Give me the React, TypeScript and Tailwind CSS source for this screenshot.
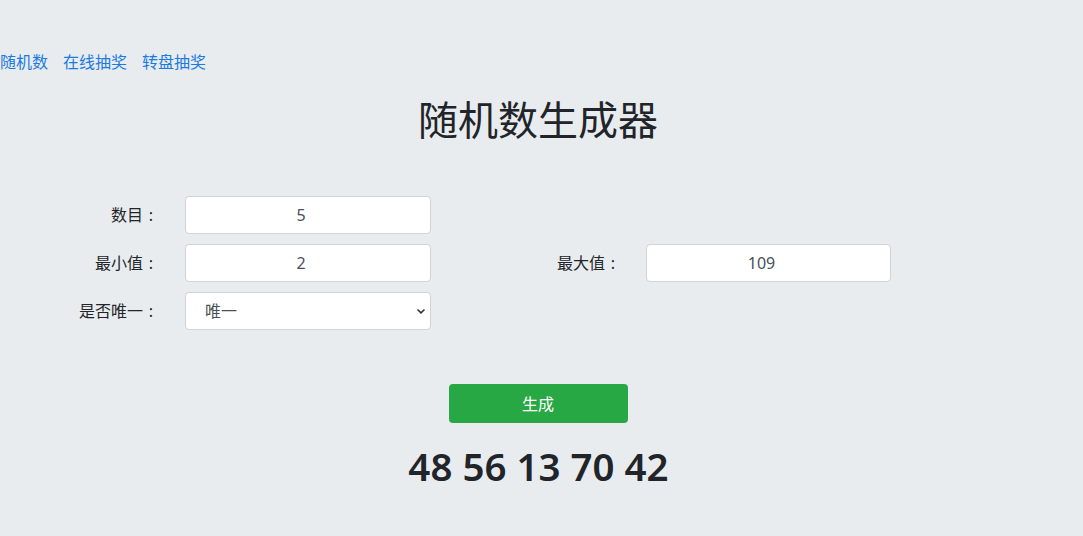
import React from "react";

const font = { fontFamily: '"Noto Sans", "Noto Sans CJK SC", sans-serif' };

function Label({ text, w }: { text: string; w: string }) {
  return (
    <div className={`${w} shrink-0 flex justify-end items-center text-[16px] text-[#212529]`}>
      <span>{text}</span>
      <span className="inline-block w-[16px] text-center">:</span>
    </div>
  );
}

function NumInput({ value }: { value: string }) {
  return (
    <input
      type="text"
      defaultValue={value}
      className="w-full min-w-0 h-[38px] bg-white border border-[#ced4da] rounded-[4px] text-center text-[16px] text-[#495057] pl-[12px] pr-[26px] outline-none"
    />
  );
}

export default function App() {
  return (
    <div className="min-h-[536px] bg-[#e9ecef] text-[#212529]" style={font}>
      <div className="pt-[50px] flex gap-[15px] text-[16px] leading-[24px] text-[#1a7be0]">
        <a href="#">随机数</a>
        <a href="#">在线抽奖</a>
        <a href="#">转盘抽奖</a>
      </div>
      <h1 className="mt-[22px] pr-[7px] text-center text-[40px] leading-[48px] font-normal">随机数生成器</h1>
      <div className="mt-[52px] flex flex-col gap-[10px]">
        <div className="flex">
          <div className="w-[541px] flex">
            <Label text="数目" w="w-[170px] pr-[11px]" />
            <div className="ml-[15px] w-[246px] flex">
              <NumInput value="5" />
            </div>
          </div>
        </div>
        <div className="flex">
          <div className="w-[541px] flex">
            <Label text="最小值" w="w-[170px] pr-[11px]" />
            <div className="ml-[15px] w-[246px] flex">
              <NumInput value="2" />
            </div>
          </div>
          <div className="flex">
            <Label text="最大值" w="w-[90px] pr-[10px]" />
            <div className="ml-[15px] w-[245px] flex">
              <NumInput value="109" />
            </div>
          </div>
        </div>
        <div className="flex">
          <div className="w-[541px] flex">
            <Label text="是否唯一" w="w-[170px] pr-[11px]" />
            <div className="ml-[15px] w-[246px] relative">
              <select className="appearance-none w-full h-[38px] bg-white border border-[#ced4da] rounded-[4px] text-[16px] text-[#495057] pl-[19px] outline-none">
                <option>唯一</option>
                <option>不唯一</option>
              </select>
              <svg className="absolute right-[5px] top-[15px] pointer-events-none" width="10" height="8" viewBox="0 0 10 8">
                <path d="M1.5 2.5 L5 5.8 L8.5 2.5" fill="none" stroke="#333" strokeWidth="1.6" />
              </svg>
            </div>
          </div>
        </div>
      </div>
      <div className="mt-[54px] flex justify-center">
        <button className="w-[179px] h-[39px] bg-[#28a745] rounded-[4px] text-white text-[16px] ml-[-7px]">生成</button>
      </div>
      <div className="mt-[19px] pr-[6px] text-center text-[38.5px] leading-[48px] font-semibold">48 56 13 70 42</div>
    </div>
  );
}
